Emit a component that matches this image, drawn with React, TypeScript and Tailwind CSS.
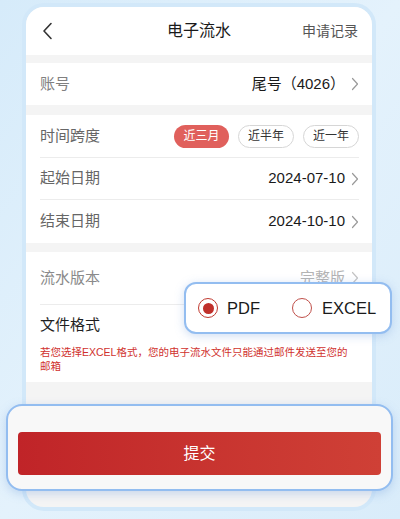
import React from "react";

const FONT = {
  fontFamily: '"Liberation Sans", "Noto Sans CJK SC", sans-serif',
};

function Chevron({ color = "#9a9a9a" }: { color?: string }) {
  return (
    <svg width="8" height="14" viewBox="0 0 8 14" fill="none" className="ml-[6px]">
      <polyline
        points="1.5,1.5 6.5,7 1.5,12.5"
        stroke={color}
        strokeWidth="1.2"
        strokeLinecap="round"
        strokeLinejoin="round"
      />
    </svg>
  );
}

const SPANS = ["近三月", "近半年", "近一年"];

export default function App() {
  return (
    <div
      className="relative w-[400px] h-[519px] overflow-hidden bg-gradient-to-br from-[#d6ebfa] via-[#e4f2fc] to-[#d9ecfa]"
      style={FONT}
    >
      {/* phone card */}
      <div className="ml-[22px] mt-[3px] w-[354px] h-[508px] rounded-[22px] border-[4px] border-[#d2e8f9] bg-[#f4f4f4] overflow-hidden">
        {/* header */}
        <div className="flex h-[48px] items-center justify-between bg-white px-[14px]">
          <svg width="12" height="18" viewBox="0 0 12 18" fill="none" className="ml-[2px]">
            <polyline
              points="9,1.5 2,9 9,16.5"
              stroke="#333"
              strokeWidth="1.6"
              strokeLinecap="round"
              strokeLinejoin="round"
            />
          </svg>
          <div className="ml-[42px] text-[16px] text-[#1a1a1a]">电子流水</div>
          <div className="text-[14px] text-[#555]">申请记录</div>
        </div>

        <div className="h-[8px]" />

        {/* account */}
        <div className="flex h-[42px] items-center justify-between bg-white pl-[14px] pr-[13px]">
          <span className="text-[15px] text-[#808080]">账号</span>
          <div className="flex items-center text-[15px] text-[#1a1a1a]">
            尾号（4026）
            <Chevron />
          </div>
        </div>

        <div className="h-[10px]" />

        {/* time block */}
        <div className="bg-white pl-[14px] pr-[13px]">
          <div className="flex h-[43px] items-center justify-between border-b border-[#ececec]">
            <span className="text-[15px] text-[#666]">时间跨度</span>
            <div className="flex gap-[9px]">
              {SPANS.map((s, i) => (
                <div
                  key={s}
                  className={
                    i === 0
                      ? "flex h-[23px] w-[55px] items-center justify-center rounded-full bg-[#e0605c] text-[12px] text-white"
                      : "flex h-[23px] w-[56px] items-center justify-center rounded-full border border-[#d6d6d6] text-[12px] text-[#333]"
                  }
                >
                  {s}
                </div>
              ))}
            </div>
          </div>
          <div className="flex h-[42px] items-center justify-between border-b border-[#ececec]">
            <span className="text-[15px] text-[#666]">起始日期</span>
            <div className="flex items-center text-[15px] text-[#1a1a1a]">
              2024-07-10
              <Chevron />
            </div>
          </div>
          <div className="flex h-[43px] items-center justify-between">
            <span className="text-[15px] text-[#666]">结束日期</span>
            <div className="flex items-center text-[15px] text-[#1a1a1a]">
              2024-10-10
              <Chevron />
            </div>
          </div>
        </div>

        <div className="h-[9px]" />

        {/* version & format */}
        <div className="bg-white pl-[14px] pr-[13px] pb-[9px]">
          <div className="flex h-[53px] items-center justify-between border-b border-[#ececec]">
            <span className="text-[15px] text-[#8a8a8a]">流水版本</span>
            <div className="flex items-center text-[15px] text-[#b3b3b3]">
              完整版
              <Chevron color="#c4c4c4" />
            </div>
          </div>
          <div className="flex h-[40px] items-center">
            <span className="text-[15px] text-[#1f1f1f]">文件格式</span>
          </div>
          <p className="whitespace-nowrap text-[10.5px] leading-[14px] text-[#d0322e]">
            若您选择EXCEL格式，您的电子流水文件只能通过邮件发送至您的
            <br />
            邮箱
          </p>
        </div>
      </div>

      {/* file format popup */}
      <div className="absolute left-[184px] top-[282px] flex h-[52px] w-[208px] items-center rounded-[12px] border-2 border-[#93bdf0] bg-white pl-[12px] shadow-[0_2px_10px_rgba(120,160,220,0.35)]">
        <div className="flex items-center">
          <div className="flex h-[20px] w-[20px] items-center justify-center rounded-full border-[1.5px] border-[#c0392f]">
            <div className="h-[11px] w-[11px] rounded-full bg-[#c0302b]" />
          </div>
          <span className="ml-[9px] text-[16.5px] text-[#1a1a1a]">PDF</span>
        </div>
        <div className="ml-[32px] flex items-center">
          <div className="h-[20px] w-[20px] rounded-full border-[1.5px] border-[#c0504a]" />
          <span className="ml-[10px] text-[16.5px] text-[#1a1a1a]">EXCEL</span>
        </div>
      </div>

      {/* submit popup */}
      <div className="absolute left-[6px] top-[404px] h-[87px] w-[387px] rounded-[16px] border-2 border-[#93bdf0] bg-[#f8f8f8] px-[10px] pt-[26px] shadow-[0_3px_10px_rgba(120,160,220,0.35)]">
        <div className="flex h-[43px] items-center justify-center rounded-[4px] bg-gradient-to-r from-[#c02428] to-[#cf4036] text-[16px] text-white">
          提交
        </div>
      </div>
    </div>
  );
}
